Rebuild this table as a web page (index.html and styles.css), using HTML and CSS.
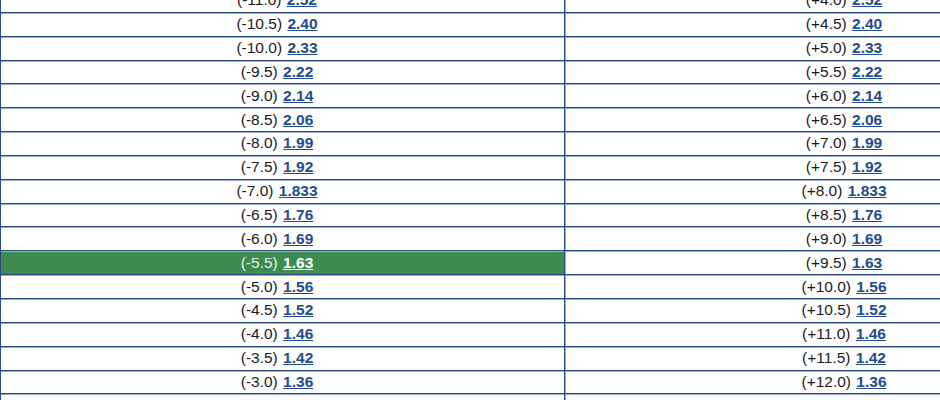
FILE: index.html
```html
<!DOCTYPE html>
<html>
<head>
  <title>Odds</title>
  <link rel="stylesheet" href="styles.css">
</head>
<body>
  <div class="wrap">
    <table class="odds">
      <colgroup><col class="col-away"><col class="col-home"></colgroup>
      <tr><td>(-11.0) <a href="#">2.52</a></td><td>(+4.0) <a href="#">2.52</a></td></tr>
      <tr><td>(-10.5) <a href="#">2.40</a></td><td>(+4.5) <a href="#">2.40</a></td></tr>
      <tr><td>(-10.0) <a href="#">2.33</a></td><td>(+5.0) <a href="#">2.33</a></td></tr>
      <tr><td>(-9.5) <a href="#">2.22</a></td><td>(+5.5) <a href="#">2.22</a></td></tr>
      <tr><td>(-9.0) <a href="#">2.14</a></td><td>(+6.0) <a href="#">2.14</a></td></tr>
      <tr><td>(-8.5) <a href="#">2.06</a></td><td>(+6.5) <a href="#">2.06</a></td></tr>
      <tr><td>(-8.0) <a href="#">1.99</a></td><td>(+7.0) <a href="#">1.99</a></td></tr>
      <tr><td>(-7.5) <a href="#">1.92</a></td><td>(+7.5) <a href="#">1.92</a></td></tr>
      <tr><td>(-7.0) <a href="#">1.833</a></td><td>(+8.0) <a href="#">1.833</a></td></tr>
      <tr><td>(-6.5) <a href="#">1.76</a></td><td>(+8.5) <a href="#">1.76</a></td></tr>
      <tr><td>(-6.0) <a href="#">1.69</a></td><td>(+9.0) <a href="#">1.69</a></td></tr>
      <tr><td class="selected">(-5.5) <a href="#">1.63</a></td><td>(+9.5) <a href="#">1.63</a></td></tr>
      <tr><td>(-5.0) <a href="#">1.56</a></td><td>(+10.0) <a href="#">1.56</a></td></tr>
      <tr><td>(-4.5) <a href="#">1.52</a></td><td>(+10.5) <a href="#">1.52</a></td></tr>
      <tr><td>(-4.0) <a href="#">1.46</a></td><td>(+11.0) <a href="#">1.46</a></td></tr>
      <tr><td>(-3.5) <a href="#">1.42</a></td><td>(+11.5) <a href="#">1.42</a></td></tr>
      <tr><td>(-3.0) <a href="#">1.36</a></td><td>(+12.0) <a href="#">1.36</a></td></tr>
      <tr><td>(-2.5) <a href="#">1.31</a></td><td>(+12.5) <a href="#">1.31</a></td></tr>
    </table>
  </div>
</body>
</html>
```

FILE: styles.css
```css
body {
  margin: 0;
  font-family: "Liberation Sans", Arial, sans-serif;
  background: #fff;
}

.wrap {
  width: 940px;
  height: 400px;
  overflow: hidden;
}

.odds {
  border-collapse: collapse;
  width: 1134px;
  margin-top: -12px;
  table-layout: fixed;
}

.col-away {
  width: 564px;
}

.odds td {
  height: 22.85px;
  padding: 0 11px 0 0;
  text-align: center;
  font-size: 15.5px;
  color: #1a1a1a;
  border-top: 1px solid #284a84;
  border-bottom: 1px solid #284a84;
  border-left: 1px solid #284a84;
  box-shadow: inset 0 1px 0 #9aaccb;
}

.odds td + td {
  box-shadow: inset 0 1px 0 #9aaccb, inset 1px 0 0 #9aaccb;
}

.odds a {
  color: #1f4c8e;
  font-weight: bold;
  margin-left: 1px;
}

.odds td.selected {
  background: #3d8b50;
  color: #e8efe9;
}

.odds td.selected a {
  color: #fff;
}
```
